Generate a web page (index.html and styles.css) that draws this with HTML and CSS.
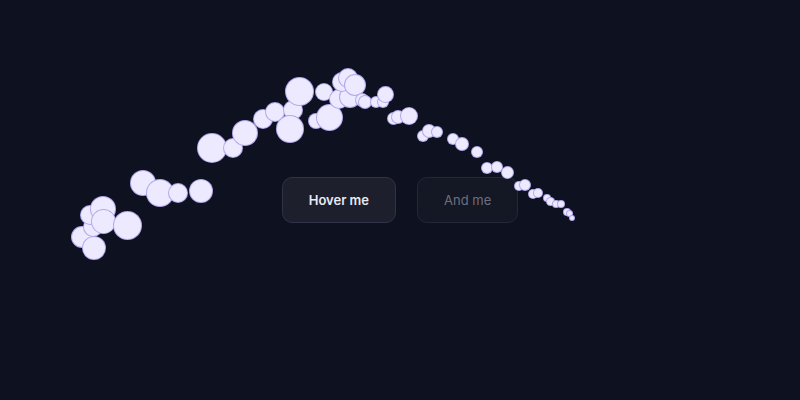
FILE: index.html
```html
<!DOCTYPE html>
<html lang="en">
<head>
    <meta charset="UTF-8">
    <meta name="viewport" content="width=device-width, initial-scale=1.0">
    <title>Cursor trail</title>
    <link rel="stylesheet" href="styles.css">
</head>
<body>

<div class="stage">
    <div class="button-row">
        <button class="btn btn-primary" type="button">Hover me</button>
        <button class="btn btn-muted" type="button">And me</button>
    </div>
    <div class="trail" id="trail"></div>
</div>

<script>
const points = [
  [82,237,11], [94,248,12], [93,227,10], [90,215,10], [103,209,13],
  [103,221,12.5], [127,225,14.5], [143,183,13], [160,193,14], [178,193,10],
  [201,191,12], [212,148,15], [233,148,10], [245,133,13], [263,119,10],
  [275,112,10], [293,110,10], [290,129,14], [299,91,14.5], [316,121,8],
  [329,117,13.5], [324,92,9], [339,99,10], [350,97,11], [342,82,10],
  [348,78,10], [355,85,11], [362,100,7], [365,102,7], [376,102,6],
  [383,102,6], [385,94,8.5], [393,118,6.5], [398,117,7], [409,116,9],
  [423,136,6], [429,131,7], [437,132,6], [453,139,6], [462,144,7],
  [477,152,6], [487,168,6], [497,167,6], [507,172,6.5], [519,186,5],
  [525,185,6], [533,194,5], [538,193,5], [547,198,4], [550,201,4.5],
  [556,204,4], [561,204,4], [567,212,4], [569,213,3.5], [572,218,3]
];

const trail = document.getElementById('trail');
points.forEach(([x, y, r]) => {
  const dot = document.createElement('span');
  dot.className = 'dot';
  dot.style.left = (x - r) + 'px';
  dot.style.top = (y - r) + 'px';
  dot.style.width = dot.style.height = (r * 2) + 'px';
  trail.appendChild(dot);
});
</script>
</body>
</html>
```

FILE: styles.css
```css
html, body {
    margin: 0;
    height: 100%;
}

body {
    background-color: #0e1120;
    font-family: Inter, "Noto Sans", sans-serif;
}

.stage {
    position: relative;
    height: 100%;
    display: flex;
    align-items: center;
    justify-content: center;
    overflow: hidden;
}

.button-row {
    display: flex;
    gap: 21px;
}

.btn {
    padding: 12px 26px;
    font-family: inherit;
    font-size: 13px;
    line-height: 20px;
    border-radius: 10px;
    cursor: pointer;
}

.btn-primary {
    background-color: #1d1f2c;
    border: 1px solid #303345;
    color: #e8e9f1;
    font-weight: 600;
}

.btn-muted {
    background-color: #141724;
    border: 1px solid #242738;
    color: #6c6f80;
    font-weight: 400;
}

.trail {
    position: absolute;
    inset: 0;
    pointer-events: none;
}

.dot {
    position: absolute;
    box-sizing: border-box;
    border-radius: 50%;
    background-color: #ede9fe;
    border: 1px solid rgba(130, 118, 222, 0.55);
}
```
